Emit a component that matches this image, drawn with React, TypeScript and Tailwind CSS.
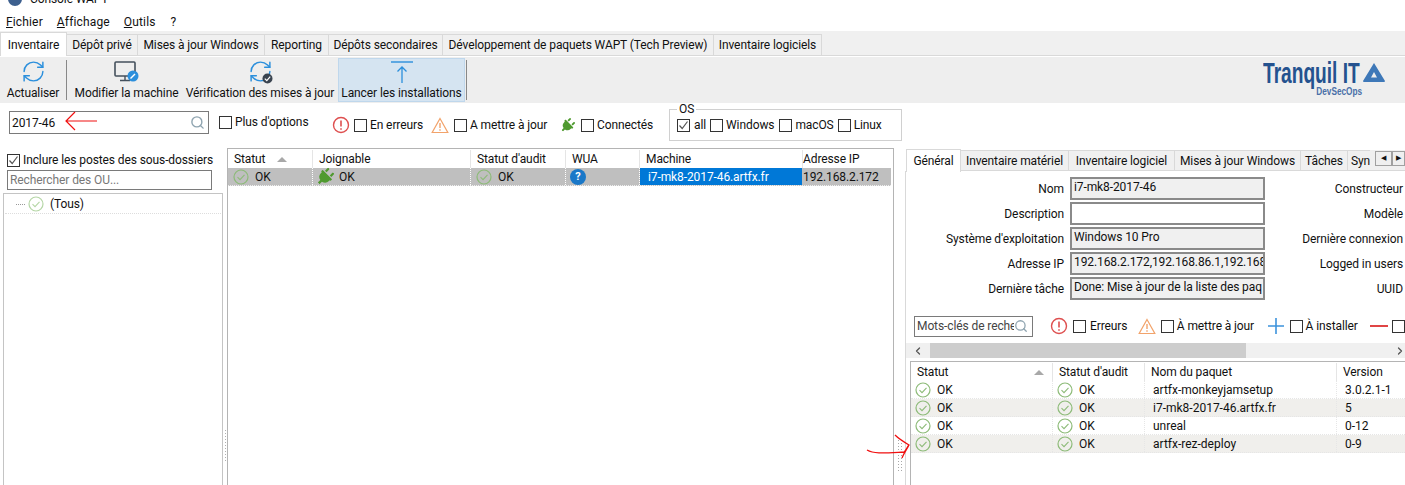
import { ChevronLeft, ChevronRight, RefreshCw, Search } from "lucide-react";
import { FaPlug } from "react-icons/fa";

const mainTabs = [
  { label: "Dépôt privé", w: "w-[71px]" },
  { label: "Mises à jour Windows", w: "w-[127px]" },
  { label: "Reporting", w: "w-[64px]" },
  { label: "Dépôts secondaires", w: "w-[114px]" },
  { label: "Développement de paquets WAPT (Tech Preview)", w: "w-[271px]" },
  { label: "Inventaire logiciels", w: "w-[108px]" },
];

const sideTabs = [
  { label: "Inventaire matériel", w: "w-[108px]" },
  { label: "Inventaire logiciel", w: "w-[106px]" },
  { label: "Mises à jour Windows", w: "w-[126px]" },
  { label: "Tâches", w: "w-[47px]" },
];

const fields = [
  { label: "Nom", value: "i7-mk8-2017-46", right: "Constructeur", ro: true },
  { label: "Description", value: "", right: "Modèle", ro: false },
  { label: "Système d'exploitation", value: "Windows 10 Pro", right: "Dernière connexion", ro: true },
  { label: "Adresse IP", value: "192.168.2.172,192.168.86.1,192.168.17", right: "Logged in users", ro: true },
  { label: "Dernière tâche", value: "Done: Mise à jour de la liste des paq", right: "UUID", ro: true },
];

const packages = [
  { name: "artfx-monkeyjamsetup", version: "3.0.2.1-1" },
  { name: "i7-mk8-2017-46.artfx.fr", version: "5" },
  { name: "unreal", version: "0-12" },
  { name: "artfx-rez-deploy", version: "0-9" },
];

function OkIcon({ light }: { light?: boolean }) {
  const color = light ? "#b5d6a6" : "#8dbb78";
  return (
    <svg width="16" height="16" viewBox="0 0 16 16" fill="none" className="shrink-0">
      <circle cx="8" cy="8" r="7" stroke={color} strokeWidth="1.2" />
      <path d="M4.5 8.2 7 10.6 11.5 5.8" stroke={color} strokeWidth="1.1" />
    </svg>
  );
}

function ErrorIcon() {
  return (
    <svg width="18" height="18" viewBox="0 0 18 18" fill="none" className="shrink-0">
      <circle cx="9" cy="9" r="7.5" stroke="#de4f4f" strokeWidth="1.4" />
      <path d="M9 4.5V10.5M9 12.2V13.8" stroke="#de4f4f" strokeWidth="1.6" />
    </svg>
  );
}

function WarnIcon() {
  return (
    <svg width="18" height="17" viewBox="0 0 18 17" fill="none" className="shrink-0">
      <path d="M9 1.5 16.8 15.5H1.2Z" stroke="#f2a36b" strokeWidth="1.2" />
      <path d="M9 6V11M9 12.2V13.8" stroke="#f2a36b" strokeWidth="1.4" />
    </svg>
  );
}

function Plug({ size }: { size: number }) {
  return <FaPlug size={size} color="#4f9a2f" className="rotate-45 shrink-0" />;
}

function Check({ checked }: { checked?: boolean }) {
  return (
    <span className="w-[13px] h-[13px] border border-[#333] bg-white shrink-0 flex items-center justify-center">
      {checked && (
        <svg width="11" height="11" viewBox="0 0 11 11" fill="none">
          <path d="M1.5 5.5 4.2 8.5 9.5 1.5" stroke="#555" strokeWidth="1.2" />
        </svg>
      )}
    </span>
  );
}

function SortArrow() {
  return <span className="w-0 h-0 border-x-[5px] border-x-transparent border-b-[5px] border-b-[#a8a8a8]" />;
}

function ToolButton({ label, icon, w, active }: { label: string; icon: React.ReactNode; w: string; active?: boolean }) {
  return (
    <div className={`${w} h-[44px] flex flex-col items-center justify-between shrink-0 border ${active ? "bg-[#d5e4f1] border-[#bfd7ec]" : "border-transparent"}`}>
      <div className="h-[25px] flex items-center justify-center">{icon}</div>
      <span className="leading-[15px] whitespace-nowrap">{label}</span>
    </div>
  );
}

function HeadCell({ w, children, sort }: { w: string; children: React.ReactNode; sort?: boolean }) {
  return (
    <div className={`${w} shrink-0 h-full flex items-center border-r border-[#e5e5e5] pl-[6px] gap-[12px] whitespace-nowrap`}>
      {children}
      {sort && <SortArrow />}
    </div>
  );
}

export default function App() {
  return (
    <div
      className="relative w-[1405px] h-[485px] overflow-hidden bg-white text-[12px] text-[#111] flex flex-col tracking-[-0.1px]"
      style={{ fontFamily: 'Roboto, sans-serif' }}
    >
      {/* title bar, cut at the top */}
      <div className="h-[14px] shrink-0 flex items-end pl-[8px] gap-[8px] overflow-hidden">
        <span className="w-[14px] h-[14px] mb-[8px] rounded-full bg-[#3c5f8e] shrink-0" />
        <span className="leading-[16px] mb-[7px]">Console WAPT</span>
      </div>

      {/* menu */}
      <div className="h-[17px] shrink-0 flex items-center pl-[6px] gap-[14px] leading-[17px] tracking-[0.15px]">
        <span><u>F</u>ichier</span>
        <span><u>A</u>ffichage</span>
        <span><u>O</u>utils</span>
        <span className="ml-[1px]">?</span>
      </div>

      {/* main tabs */}
      <div className="h-[25px] shrink-0 bg-[#f0f0f0] border-b border-[#d9d9d9] flex items-end">
        <div className="w-[67px] h-[24px] -mb-[1px] bg-white border-t border-x border-[#d9d9d9] flex items-center justify-center z-10">Inventaire</div>
        {mainTabs.map((t) => (
          <div key={t.label} className={`${t.w} h-[21px] shrink-0 border-t border-r border-[#d9d9d9] flex items-center justify-center whitespace-nowrap`}>
            {t.label}
          </div>
        ))}
      </div>

      {/* toolbar */}
      <div className="h-[46px] mt-[1px] shrink-0 bg-[#eeeeee] flex items-center">
        <ToolButton label="Actualiser" w="w-[66px]" icon={<RefreshCw size={25} strokeWidth={1.4} color="#2b8fdc" />} />
        <span className="w-px h-[40px] bg-[#888] shrink-0" />
        <ToolButton
          label="Modifier la machine"
          w="w-[119px]"
          icon={
            <svg width="26" height="24" viewBox="0 0 26 24" fill="none">
              <rect x="1" y="2" width="20" height="14" rx="1" stroke="#44505c" strokeWidth="1.6" />
              <path d="M11 16V20M6 20.5H16" stroke="#44505c" strokeWidth="1.4" />
              <circle cx="19" cy="16" r="5.5" fill="#2b8fdc" />
              <path d="M16.5 18.5 21 14" stroke="#fff" strokeWidth="1.4" />
            </svg>
          }
        />
        <ToolButton
          label="Vérification des mises à jour"
          w="w-[148px]"
          icon={
            <span className="relative w-[25px] h-[25px] block">
              <RefreshCw size={25} strokeWidth={1.4} color="#2b8fdc" />
              <svg width="11" height="11" viewBox="0 0 11 11" className="absolute right-0 bottom-0">
                <circle cx="5.5" cy="5.5" r="5" fill="#3a4450" />
                <path d="M2.8 5.6 4.8 7.6 8.2 3.6" stroke="#fff" strokeWidth="1.2" fill="none" />
              </svg>
            </span>
          }
        />
        <span className="ml-[4px]">
          <ToolButton
            active
            label="Lancer les installations"
            w="w-[127px]"
            icon={
              <svg width="24" height="24" viewBox="0 0 24 24" fill="none">
                <path d="M1 2H23" stroke="#2b8fdc" strokeWidth="1.4" />
                <path d="M12 23V7M7.5 11.5 12 7 16.5 11.5" stroke="#2b8fdc" strokeWidth="1.3" />
              </svg>
            }
          />
        </span>
        <span className="w-px h-[40px] bg-[#888] ml-[1px] shrink-0" />

        <div className="ml-auto mr-[18px] w-[124px] h-[38px] -mt-[3px] tracking-normal">
          <div className="flex items-center h-[26px]">
            <span className="origin-left scale-x-[0.66] text-[#24528f] font-bold text-[29px] leading-[26px] whitespace-nowrap w-[96px]" style={{ fontFamily: '"Liberation Sans", sans-serif' }}>
              Tranquil IT
            </span>
            <svg width="24" height="21" viewBox="0 0 24 21" className="shrink-0 ml-[3px]">
              <path fillRule="evenodd" d="M12 1 23 19a1 1 0 0 1-1 1H2a1 1 0 0 1-1-1ZM12 10 9 15.5h6Z" fill="#3e78b8" />
            </svg>
          </div>
          <div className="pl-[71px] leading-[11px] text-[11px] font-bold text-[#4a70a8] origin-left scale-x-[0.75] whitespace-nowrap" style={{ fontFamily: '"Liberation Sans", sans-serif' }}>
            DevSecOps
          </div>
        </div>
      </div>

      {/* filter row */}
      <div className="h-[45px] shrink-0 flex items-start">
        <div className="ml-[9px] mt-[8px] w-[200px] h-[23px] border border-[#7a7a7a] flex items-center pl-[2px] pr-[3px] justify-between">
          <span>2017-46</span>
          <Search size={15} color="#8fa4b0" strokeWidth={2.2} />
        </div>
        <div className="ml-[10px] mt-[12px] flex items-center gap-[3px] leading-[14px]">
          <Check />
          <span>Plus d'options</span>
        </div>
        <div className="absolute left-[332px] top-[116px] h-[18px] flex items-center">
          <ErrorIcon />
          <span className="ml-[4px]"><Check /></span>
          <span className="ml-[3px]">En erreurs</span>
        </div>
        <div className="absolute left-[431px] top-[116px] h-[18px] flex items-center">
          <WarnIcon />
          <span className="ml-[5px]"><Check /></span>
          <span className="ml-[3px]">A mettre à jour</span>
        </div>
        <div className="absolute left-[560px] top-[116px] h-[18px] flex items-center">
          <Plug size={15} />
          <span className="ml-[6px]"><Check /></span>
          <span className="ml-[3px]">Connectés</span>
        </div>
        <fieldset className="absolute left-[669px] top-[103px] w-[233px] h-[38px] border border-[#d0d0d0] pl-[7px] leading-[14px]">
          <legend className="px-[2px] leading-[13px]">OS</legend>
          <div className="flex items-center h-[16px] mt-[1px]">
            <Check checked />
            <span className="ml-[4px]">all</span>
            <span className="ml-[4px]"><Check /></span>
            <span className="ml-[3px]">Windows</span>
            <span className="ml-[5px]"><Check /></span>
            <span className="ml-[3px]">macOS</span>
            <span className="ml-[4px]"><Check /></span>
            <span className="ml-[3px]">Linux</span>
          </div>
        </fieldset>
      </div>

      {/* body */}
      <div className="flex-1 min-h-0 flex">
        {/* OU tree */}
        <div className="w-[223px] shrink-0 flex flex-col pt-[5px]">
          <div className="ml-[7px] flex items-center gap-[3px] h-[14px] whitespace-nowrap">
            <Check checked />
            <span>Inclure les postes des sous-dossiers</span>
          </div>
          <div className="ml-[7px] mt-[3px] w-[205px] h-[20px] border border-[#7a7a7a] pl-[2px] text-[#777] flex items-center">Rechercher des OU...</div>
          <div className="ml-[3px] mt-[3px] flex-1 border border-b-0 border-[#c4c4c4]">
            <div className="h-[19px] mt-[1px] mx-[1px] flex items-center border-b border-dotted border-[#ddd] pl-[11px]">
              <span className="w-[9px] border-t border-dotted border-[#999]" />
              <span className="ml-[3px]"><OkIcon light /></span>
              <span className="ml-[6px]">(Tous)</span>
            </div>
          </div>
        </div>

        {/* splitter */}
        <div className="w-[4px] shrink-0 flex flex-col justify-end pb-[24px] items-center">
          <div className="w-[3px] h-[32px] [background-image:radial-gradient(#b0b0b0_1px,transparent_1px)] [background-size:3px_3px]" />
        </div>

        {/* machine grid */}
        <div className="w-[667px] shrink-0 border border-b-0 border-[#b4b4b4]">
          <div className="h-[18px] mt-[1px] flex items-center">
            <HeadCell w="w-[85px]" sort>Statut</HeadCell>
            <HeadCell w="w-[158px]">Joignable</HeadCell>
            <HeadCell w="w-[95px]">Statut d'audit</HeadCell>
            <HeadCell w="w-[74px]">WUA</HeadCell>
            <HeadCell w="w-[163px]">Machine</HeadCell>
            <div className="pl-0 whitespace-nowrap">Adresse IP</div>
          </div>
          <div className="h-[18px] w-[663px] bg-[#bfbfbf] flex items-center border-b border-dotted border-[#eee]">
            <div className="w-[85px] h-full flex items-center pl-[5px] gap-[6px] border-r border-dotted border-white"><OkIcon /><span>OK</span></div>
            <div className="w-[158px] h-full flex items-center pl-[3px] gap-[5px] border-r border-dotted border-white"><Plug size={18} /><span>OK</span></div>
            <div className="w-[95px] h-full flex items-center pl-[5px] gap-[6px] border-r border-dotted border-white"><OkIcon /><span>OK</span></div>
            <div className="w-[74px] h-full flex items-center pl-[4px] border-r border-dotted border-white">
              <span className="w-[16px] h-[16px] rounded-full bg-[#1a78c8] text-white font-bold text-[11px] flex items-center justify-center leading-none">?</span>
            </div>
            <div className="w-[162px] h-full bg-[#0078d7] text-white flex items-center pl-[8px] whitespace-nowrap">i7-mk8-2017-46.artfx.fr</div>
            <div className="pl-[1px] whitespace-nowrap">192.168.2.172</div>
          </div>
        </div>

        {/* splitter */}
        <div className="w-[11px] shrink-0 flex flex-col justify-end pb-[14px] items-center">
          <div className="w-[6px] h-[32px] [background-image:radial-gradient(#a8a8a8_1px,transparent_1px)] [background-size:3px_3px]" />
        </div>

        {/* machine details */}
        <div className="flex-1 min-w-0 overflow-hidden flex flex-col">
          <div className="h-[23px] shrink-0 flex items-end relative">
            <div className="ml-[1px] w-[55px] h-[23px] -mb-[1px] bg-white border-t border-x border-[#d9d9d9] flex items-center justify-center z-10">Général</div>
            <div className="flex-1 h-[21px] bg-[#f0f0f0] border-b border-[#d9d9d9] flex items-center overflow-hidden">
              {sideTabs.map((t) => (
                <div key={t.label} className={`${t.w} h-full shrink-0 border-t border-r border-[#d9d9d9] flex items-center justify-center whitespace-nowrap`}>
                  {t.label}
                </div>
              ))}
              <div className="pl-[3px] border-t border-[#d9d9d9] h-full flex items-center">Syn</div>
            </div>
            <div className="absolute right-0 top-[3px] flex">
              <div className="w-[17px] h-[15px] bg-[#efefef] border border-[#a0a0a0] text-[7px] flex items-center justify-center">◀</div>
              <div className="w-[13px] h-[15px] bg-[#efefef] border border-[#a0a0a0] text-[7px] flex items-center justify-center">▶</div>
            </div>
          </div>

          <div className="flex-1 min-h-0 border-l border-[#d9d9d9] flex flex-col">
            <div className="h-[143px] shrink-0 pt-[6px] flex flex-col gap-[2px]">
              {fields.map((f) => (
                <div key={f.label} className="h-[23px] flex items-center">
                  <div className="w-[158px] shrink-0 text-right whitespace-nowrap">{f.label}</div>
                  <div className={`ml-[6px] w-[195px] h-[23px] shrink-0 border-2 border-[#8a8a8a] ${f.ro ? "bg-[#f0f0f0]" : "bg-white"} pl-[2px] overflow-hidden whitespace-nowrap leading-[17px]`}>
                    {f.value}
                  </div>
                  <div className="ml-auto pr-[2px] whitespace-nowrap">{f.right}</div>
                </div>
              ))}
            </div>

            <div className="relative h-[22px] mt-[1px] shrink-0 flex items-center ml-[8px]">
              <div className="w-[119px] h-[21px] shrink-0 border border-[#7a7a7a] flex items-center pl-[2px] overflow-hidden relative whitespace-nowrap">
                <span className="text-[#444]">Mots-clés de recherche</span>
                <span className="absolute right-0 top-0 h-full w-[18px] bg-white flex items-center">
                  <Search size={14} color="#8fa4b0" strokeWidth={2.2} />
                </span>
              </div>
              <span className="ml-[17px]"><ErrorIcon /></span>
              <span className="ml-[5px]"><Check /></span>
              <span className="ml-[4px] w-[49px]">Erreurs</span>
              <WarnIcon />
              <span className="ml-[5px]"><Check /></span>
              <span className="ml-[3px] w-[93px] whitespace-nowrap">À mettre à jour</span>
              <svg width="16" height="16" viewBox="0 0 16 16" className="shrink-0">
                <path d="M0 8H16M8 0V16" stroke="#3d93dc" strokeWidth="1.6" />
              </svg>
              <span className="ml-[6px]"><Check /></span>
              <span className="ml-[3px] w-[66px] whitespace-nowrap">À installer</span>
              <span className="w-[18px] h-[2px] bg-[#e04545] shrink-0" />
              <span className="ml-[4px]"><Check /></span>
            </div>

            <div className="h-[15px] mt-[6px] shrink-0 bg-[#f0f0f0] flex items-center">
              <span className="w-[24px] flex justify-center"><ChevronLeft size={12} strokeWidth={2.5} color="#555" /></span>
              <div className="w-[316px] h-full bg-[#cdcdcd]" />
              <span className="ml-auto mr-[-1px] w-[12px]"><ChevronRight size={12} strokeWidth={2.5} color="#555" /></span>
            </div>

            <div className="flex-1 min-h-0 mt-[3px] ml-[4px] border border-b-0 border-r-0 border-[#b4b4b4]">
              <div className="h-[18px] mt-[1px] flex items-center">
                <div className="w-[142px] h-full shrink-0 flex items-center justify-between pl-[6px] pr-[8px] border-r border-[#e5e5e5]">Statut<SortArrow /></div>
                <div className="w-[92px] h-full shrink-0 flex items-center pl-[6px] border-r border-[#e5e5e5] whitespace-nowrap">Statut d'audit</div>
                <div className="w-[192px] h-full shrink-0 flex items-center pl-[6px] border-r border-[#e5e5e5]">Nom du paquet</div>
                <div className="pl-[6px]">Version</div>
              </div>
              {packages.map((p, i) => (
                <div key={p.name} className={`h-[18px] flex items-center border-b border-dotted border-[#e6e6e6] tracking-normal ${i % 2 === 1 ? "bg-[#f0efec]" : ""}`}>
                  <div className="w-[142px] h-full shrink-0 flex items-center pl-[4px] gap-[6px] border-r border-dotted border-[#e6e6e6]"><OkIcon /><span>OK</span></div>
                  <div className="w-[92px] h-full shrink-0 flex items-center pl-[4px] gap-[6px] border-r border-dotted border-[#e6e6e6]"><OkIcon /><span>OK</span></div>
                  <div className="w-[192px] h-full shrink-0 flex items-center pl-[8px] border-r border-dotted border-[#e6e6e6] whitespace-nowrap">{p.name}</div>
                  <div className="pl-[8px]">{p.version}</div>
                </div>
              ))}
            </div>
          </div>
        </div>
      </div>

      {/* red hand-drawn marks over the screenshot */}
      <svg width="34" height="20" viewBox="0 0 34 20" fill="none" className="absolute left-[64px] top-[111px]">
        <path d="M2 10H33M11 1 2 10 11 19" stroke="#f01010" strokeWidth="1.2" />
      </svg>
      <svg width="46" height="26" viewBox="0 0 46 26" fill="none" className="absolute left-[866px] top-[433px]">
        <path d="M1 17C8 21 18 20 38 19C40 18 41 14 43 12M29 2C33 6 38 9 43 12C41 16 38 20 36 25" stroke="#f01010" strokeWidth="1.3" />
      </svg>
    </div>
  );
}
